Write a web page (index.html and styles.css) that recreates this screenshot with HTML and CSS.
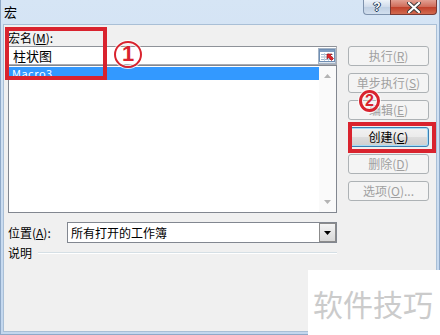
FILE: index.html
```html
<!DOCTYPE html>
<html lang="zh-CN">
<head>
<meta charset="utf-8">
<title>宏</title>
<link rel="stylesheet" href="styles.css">
</head>
<body>
<div class="window">
  <div class="titlebar">
    <span class="title">宏</span>
    <div class="caption-btns">
      <span class="cap-help">?</span>
      <span class="cap-close">
        <svg width="14" height="11" viewBox="0 0 14 11">
          <path d="M2 1 L12 10 M12 1 L2 10" stroke="#3b3b3b" stroke-width="4" stroke-linecap="round"/>
          <path d="M2 1 L12 10 M12 1 L2 10" stroke="#ffffff" stroke-width="2.2" stroke-linecap="round"/>
        </svg>
      </span>
    </div>
  </div>

  <div class="client">
    <div class="left">
      <div class="label">宏名(<u>M</u>):</div>
      <div class="namebox">
        <span class="nametext">柱状图</span>
        <span class="refbtn">
          <svg width="16" height="13" viewBox="0 0 16 13">
            <rect x="0.5" y="0.5" width="15" height="12" fill="#ffffff" stroke="#6f8fb4"/>
            <rect x="1" y="1" width="14" height="2" fill="#7f9ec4"/>
            <path d="M2 5.5 H14 M2 8 H14 M2 10.5 H14" stroke="#9fb3cc"/>
            <path d="M5.5 4 V12 M9.5 4 V12" stroke="#c3cfdd"/>
            <path d="M8 5 L13 5 L11.5 6.5 L14.5 9.5 L12.5 11.5 L9.5 8.5 L8 10 Z" fill="#e0252b" stroke="#8a1014" stroke-width="0.6"/>
          </svg>
        </span>
      </div>
      <div class="listbox">
        <div class="items">
          <div class="item selected">Macro3</div>
        </div>
        <div class="vscroll">
          <svg width="7" height="4" viewBox="0 0 7 4"><path d="M0 4 L3.5 0 L7 4 Z" fill="#b4b4b4"/></svg>
          <svg width="7" height="4" viewBox="0 0 7 4"><path d="M0 0 L3.5 4 L7 0 Z" fill="#b4b4b4"/></svg>
        </div>
      </div>
      <div class="location">
        <span class="loc-label">位置(<u>A</u>):</span>
        <div class="combo">
          <span class="combo-text">所有打开的工作簿</span>
          <span class="combo-btn">
            <svg width="7" height="4" viewBox="0 0 7 4"><path d="M0 0 L3.5 4 L7 0 Z" fill="#000000"/></svg>
          </span>
        </div>
      </div>
      <div class="desc">
        <span>说明</span>
        <span class="rule"></span>
      </div>
    </div>

    <div class="buttons">
      <button class="btn" disabled>执行(<u>R</u>)</button>
      <button class="btn" disabled>单步执行(<u>S</u>)</button>
      <button class="btn" disabled>编辑(<u>E</u>)</button>
      <button class="btn btn-default">创建(<u>C</u>)</button>
      <button class="btn" disabled>删除(<u>D</u>)</button>
      <button class="btn" disabled>选项(<u>O</u>)...</button>
    </div>
  </div>

  <!-- callout marks -->
  <div class="mark mark-name"></div>
  <div class="mark mark-create"></div>
  <span class="step step-1">1</span>
  <span class="step step-2">2</span>

  <div class="stamp">软件技巧</div>
</div>
</body>
</html>
```
FILE: styles.css
```css
* { box-sizing: border-box; }

body {
  margin: 0;
  width: 440px;
  height: 335px;
  overflow: hidden;
  font-family: "Noto Sans CJK SC", "Noto Sans", sans-serif;
  font-size: 12px;
  color: #000;
  background: #ffffff;
}

u { text-decoration: underline; text-underline-offset: 1px; }

.window {
  position: relative;
  width: 440px;
  height: 335px;
  display: flex;
  flex-direction: column;
  background: linear-gradient(#d6e5f5, #c3d7ee);
  border-left: 1px solid #8fa9c8;
  border-right: 1px solid #8fa9c8;
  border-bottom: 1px solid #8fa9c8;
}

/* ---------- title bar ---------- */
.titlebar {
  height: 24px;
  flex: none;
  display: flex;
  justify-content: space-between;
  align-items: flex-start;
}

.title {
  padding: 4px 0 0 3px;
  font-size: 13px;
  line-height: 16px;
}

.caption-btns {
  display: flex;
  margin-right: 2px;
}

.cap-help {
  width: 27px;
  height: 15px;
  border: 1px solid #7f93ad;
  border-top: none;
  border-right: none;
  border-radius: 0 0 0 4px;
  background: linear-gradient(#eef3f9, #cfdbea 50%, #bfcfe2 51%, #d2dfee);
  color: #fff;
  font-family: "Liberation Sans", sans-serif;
  font-weight: bold;
  font-size: 12px;
  line-height: 14px;
  text-align: center;
  text-shadow: 0 0 1px #243a58, 1px 0 0 #243a58, -1px 0 0 #243a58, 0 1px 0 #243a58;
}

.cap-close {
  width: 47px;
  height: 15px;
  border: 1px solid #7a3a34;
  border-top: none;
  border-radius: 0 0 4px 0;
  background: linear-gradient(#e2a093, #cf6a57 50%, #c0402a 51%, #d26a4f);
  display: flex;
  align-items: center;
  justify-content: center;
}

/* ---------- client area ---------- */
.client {
  flex: 1;
  margin: 0 2px 2px 2px;
  background: #f0f0f0;
  border: 1px solid #a9bfd6;
  padding: 5px 0 0 4px;
  display: flex;
  gap: 11px;
}

.left {
  width: 329px;
  display: flex;
  flex-direction: column;
}

.label {
  height: 16px;
  line-height: 15px;
}

.namebox {
  height: 19px;
  background: #fff;
  border: 1px solid #abadb3;
  border-top-color: #8e9299;
  display: flex;
  align-items: center;
  justify-content: space-between;
  padding-left: 4px;
}

.nametext {
  font-size: 13px;
  line-height: 15px;
}

.refbtn {
  width: 18px;
  height: 16px;
  display: flex;
  align-items: center;
  justify-content: center;
  border: 1px solid #a5b4c6;
  background: linear-gradient(#f6f8fb, #dfe6ee);
}

.listbox {
  height: 148px;
  background: #fff;
  border: 1px solid #828790;
  display: flex;
}

.items {
  flex: 1;
  padding-top: 1px;
}

.item {
  height: 13px;
  line-height: 12px;
  padding-left: 3px;
  font-size: 11px;
  letter-spacing: 0.5px;
}

.item.selected {
  background: #3399ff;
  color: #fff;
}

.vscroll {
  width: 17px;
  display: flex;
  flex-direction: column;
  align-items: center;
  justify-content: space-between;
  padding: 8px 0 8px;
  background: #fafafa;
}

.location {
  margin-top: 9px;
  height: 21px;
  display: flex;
  align-items: center;
}

.loc-label {
  width: 59px;
  flex: none;
}

.combo {
  flex: 1;
  height: 21px;
  background: #fff;
  border: 1px solid #828790;
  display: flex;
  align-items: center;
  justify-content: space-between;
  padding-left: 3px;
}

.combo-text {
  font-size: 12px;
  line-height: 14px;
}

.combo-btn {
  width: 17px;
  height: 19px;
  display: flex;
  align-items: center;
  justify-content: center;
  border: 1px solid #8b8b8b;
  background: linear-gradient(#f4f4f4, #d8d8d8);
}

.desc {
  margin-top: 3px;
  height: 14px;
  display: flex;
  align-items: center;
  gap: 6px;
  line-height: 14px;
}

.rule {
  flex: 1;
  height: 2px;
  border-top: 1px solid #d5dfe5;
  border-bottom: 1px solid #ffffff;
}

/* ---------- command buttons ---------- */
.buttons {
  width: 81px;
  display: flex;
  flex-direction: column;
  gap: 7px;
  padding-top: 16px;
}

.btn {
  height: 20px;
  padding: 0;
  border: 1px solid #adb2b5;
  border-radius: 3px;
  background: #f4f4f4;
  color: #a0a0a0;
  font-family: inherit;
  font-size: 12px;
  line-height: 16px;
}

.btn-default {
  border-color: #3c7fb1;
  color: #000;
  background: linear-gradient(#f2f2f2, #ebebeb 50%, #dddddd 51%, #cfcfcf);
  box-shadow: inset 0 0 0 1px #a6dcf7;
}

/* ---------- callouts ---------- */
.mark {
  position: absolute;
  border: 4.5px solid #d9232e;
}

.mark-name {
  left: 4px;
  top: 27px;
  width: 102px;
  height: 53px;
}

.mark-create {
  left: 347px;
  top: 122px;
  width: 88px;
  height: 31px;
}

.step {
  position: absolute;
  border: 2.5px solid #d9232e;
  border-radius: 50%;
  color: #d9232e;
  font-family: "Liberation Sans", sans-serif;
  font-weight: bold;
  text-align: center;
  box-shadow: 0 0 0 1px rgba(255, 255, 255, 0.8), inset 0 0 0 1px rgba(255, 255, 255, 0.8);
  text-shadow: 0 0 2px #ffffff;
}

.step-1 {
  left: 113px;
  top: 41px;
  width: 28px;
  height: 27px;
  font-size: 22px;
  line-height: 22px;
}

.step-2 {
  left: 358px;
  top: 90px;
  width: 21px;
  height: 22px;
  border-width: 3px;
  font-size: 16px;
  line-height: 16px;
}

.stamp {
  position: absolute;
  left: 307px;
  top: 270px;
  width: 134px;
  height: 66px;
  background: #ffffff;
  color: #cbcbcb;
  font-size: 30px;
  line-height: 30px;
  padding: 18px 0 0 5px;
  white-space: nowrap;
}
```
